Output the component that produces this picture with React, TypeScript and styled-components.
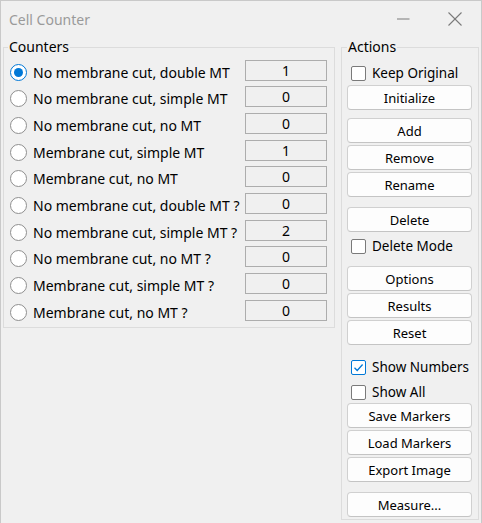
import styled, { createGlobalStyle } from "styled-components"

const GlobalStyle = createGlobalStyle`
    html, body {
        margin: 0;
        padding: 0;
        background: #f0f0f0;
    }
    body {
        font-family: "Noto Sans", "Open Sans", sans-serif;
        font-size: 14px;
        color: #000;
    }
`
const Window = styled.div`
    width: 482px;
    height: 523px;
    box-sizing: border-box;
    border: 1px solid #c9c9c9;
    border-bottom: none;
    background: #f0f0f0;
    display: flex;
    flex-direction: column;
    overflow: hidden;
`
const TitleBar = styled.div`
    height: 36px;
    display: flex;
    align-items: center;
    padding-left: 8px;
    >.title{
        flex: 1;
        color: #9a9a9a;
        font-size: 14px;
    }
`
const Control = styled.div`
    width: 52px;
    height: 36px;
    display: flex;
    align-items: center;
    justify-content: center;
`
const Body = styled.div`
    display: flex;
    align-items: flex-start;
    gap: 6px;
    padding: 2px 0 0 2px;
`
const Group = styled.fieldset<{ $width: number, $pad: string, $legendShift: number }>`
    margin: 0;
    min-width: 0;
    box-sizing: border-box;
    width: ${props => props.$width}px;
    padding: ${props => props.$pad};
    border: 1px solid #dcdcdc;
    display: flex;
    flex-direction: column;
    >legend{
        padding: 0 1px;
        margin-left: ${props => props.$legendShift}px;
        font-size: 14px;
        line-height: 16px;
    }
`
const CounterRow = styled.div`
    display: flex;
    align-items: center;
    height: 26.67px;
`
const Radio = styled.span<{ $checked?: boolean }>`
    width: 17px;
    height: 17px;
    box-sizing: border-box;
    flex-shrink: 0;
    border-radius: 50%;
    border: 1px solid ${props => props.$checked ? '#0078d7' : '#8f8f8f'};
    background: #fff;
    display: flex;
    align-items: center;
    justify-content: center;
    &::after{
        content: '';
        width: 9px;
        height: 9px;
        border-radius: 50%;
        background: #0078d7;
        display: ${props => props.$checked ? 'block' : 'none'};
    }
`
const RowLabel = styled.span`
    flex: 1;
    margin-left: 6px;
    white-space: nowrap;
    font-size: 14px;
`
const CountField = styled.div`
    width: 82px;
    height: 21px;
    box-sizing: border-box;
    margin-bottom: 4px;
    border: 1px solid #adadad;
    background: #f0f0f0;
    display: flex;
    align-items: center;
    justify-content: center;
    font-size: 14px;
`
const Button = styled.div<{ $top?: number }>`
    margin-top: ${props => props.$top ?? 2}px;
    height: 25px;
    box-sizing: border-box;
    border: 1px solid #d0d0d0;
    border-bottom-color: #c4c4c4;
    border-radius: 4px;
    background: #fdfdfd;
    display: flex;
    align-items: center;
    justify-content: center;
    font-size: 13px;
`
const CheckRow = styled.div<{ $top?: number }>`
    margin-top: ${props => props.$top ?? 2}px;
    height: 20px;
    display: flex;
    align-items: center;
    padding-left: 4px;
    font-size: 13.5px;
    white-space: nowrap;
`
const Box = styled.span<{ $checked?: boolean }>`
    width: 15px;
    height: 15px;
    box-sizing: border-box;
    flex-shrink: 0;
    margin-right: 6px;
    border: 1px solid ${props => props.$checked ? '#0078d7' : '#7a7a7a'};
    border-radius: 2px;
    background: #fff;
    display: flex;
    align-items: center;
    justify-content: center;
`

const counters = [
    { name: 'No membrane cut, double MT', count: 1 },
    { name: 'No membrane cut, simple MT', count: 0 },
    { name: 'No membrane cut, no MT', count: 0 },
    { name: 'Membrane cut, simple MT', count: 1 },
    { name: 'Membrane cut, no MT', count: 0 },
    { name: 'No membrane cut, double MT ?', count: 0 },
    { name: 'No membrane cut, simple MT ?', count: 2 },
    { name: 'No membrane cut, no MT ?', count: 0 },
    { name: 'Membrane cut, simple MT ?', count: 0 },
    { name: 'Membrane cut, no MT ?', count: 0 },
]

const Check: React.FC<{ label: string, checked?: boolean, top?: number }> = (props) =>
    <CheckRow $top={props.top}>
        <Box $checked={props.checked}>
            {props.checked &&
                <svg width="11" height="11" viewBox="0 0 11 11">
                    <polyline points="1.5,5.8 4.2,8.5 9.6,2.5" fill="none" stroke="#0078d7" strokeWidth="1.3" />
                </svg>}
        </Box>
        {props.label}
    </CheckRow>

export default function App() {
    return (
        <>
            <GlobalStyle />
            <Window>
                <TitleBar>
                    <span className="title">Cell Counter</span>
                    <Control>
                        <svg width="13" height="13" viewBox="0 0 13 13">
                            <line x1="0" y1="6" x2="12.5" y2="6" stroke="#7a7a7a" strokeWidth="1" />
                        </svg>
                    </Control>
                    <Control>
                        <svg width="14" height="14" viewBox="0 0 14 14">
                            <line x1="0.5" y1="0.5" x2="13.5" y2="13.5" stroke="#7a7a7a" strokeWidth="1.1" />
                            <line x1="13.5" y1="0.5" x2="0.5" y2="13.5" stroke="#7a7a7a" strokeWidth="1.1" />
                        </svg>
                    </Control>
                </TitleBar>
                <Body>
                    <Group $width={332} $pad="4px 7px 1px 6px" $legendShift={-2}>
                        <legend>Counters</legend>
                        {counters.map((c, i) =>
                            <CounterRow key={c.name}>
                                <Radio $checked={i === 0} />
                                <RowLabel>{c.name}</RowLabel>
                                <CountField>{c.count}</CountField>
                            </CounterRow>
                        )}
                    </Group>
                    <Group $width={138} $pad="0 6px 2px 5px" $legendShift={0}>
                        <legend>Actions</legend>
                        <Check label="Keep Original" top={8} />
                        <Button>Initialize</Button>
                        <Button $top={8}>Add</Button>
                        <Button>Remove</Button>
                        <Button>Rename</Button>
                        <Button $top={10}>Delete</Button>
                        <Check label="Delete Mode" top={4} />
                        <Button $top={10}>Options</Button>
                        <Button>Results</Button>
                        <Button>Reset</Button>
                        <Check label="Show Numbers" checked top={12} />
                        <Check label="Show All" top={5} />
                        <Button $top={1}>Save Markers</Button>
                        <Button>Load Markers</Button>
                        <Button>Export Image</Button>
                        <Button $top={10}>Measure...</Button>
                    </Group>
                </Body>
            </Window>
        </>
    )
}
